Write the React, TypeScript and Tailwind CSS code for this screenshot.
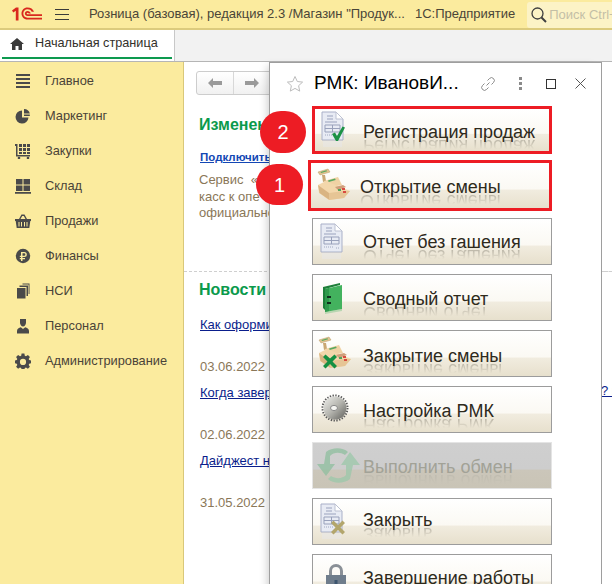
import type { ReactNode } from "react";

const FONT = "font-['Liberation_Sans',Arial,sans-serif]";

// small drawings for the left menu
const MenuIcons: Record<string, ReactNode> = {
  main: <path d="M1 1h14v2H1zM1 5h14v2H1zM1 9h14v2H1zM1 13h14v2H1z" />,
  marketing: (
    <>
      <path d="M7 2.500a6.500 6.500 0 1 0 6.500 7H7z" />
      <path d="M9 1a6 6 0 0 1 5.800 4.500H9z" />
      <path d="M9 6.500h5.800v1.500H9z" />
    </>
  ),
  purchases: (
    <>
      <path d="M0 1h2.500v11H15v1.500H1V3H0z" />
      <path d="M4 1h3v3H4zM8 1h3v3H8zM12 1h3v3h-3zM4 5h3v3H4zM8 5h3v3H8zM12 5h3v3h-3zM4 9h3v2H4zM8 9h3v2H8zM12 9h3v2h-3z" />
      <circle cx="4" cy="15" r="1.300" />
      <circle cx="13" cy="15" r="1.300" />
    </>
  ),
  stock: <path d="M1 1h6.500v5.500H1zM8.500 1H15v5.500H8.500zM1 7.500h6.500V13H1zM8.500 7.500H15V13H8.500zM0 14h16v1.800H0z" />,
  sales: (
    <>
      <path d="M4 6 6.500 1.500h3L12 6h-1.500L8.800 3H7.200L5.500 6z" />
      <path
        d="M0 6h16v2h-.7l-1 7H1.700l-1-7H0zM3.500 9v4.500h1V9zM6 9v4.500h1V9zM9 9v4.500h1V9zM11.500 9v4.500h1V9z"
        fillRule="evenodd"
      />
    </>
  ),
  finance: (
    <path
      d="M8 .8a7.200 7.200 0 1 0 0 14.400A7.200 7.200 0 0 0 8 .8zM6 4h3.300a2.500 2.500 0 0 1 0 5H7.500v1H10v1.200H7.500V13H6v-1.800H4.800V10H6V9H4.800V7.700H6zm1.500 1.300v2.400h1.700a1.200 1.200 0 0 0 0-2.400z"
      fillRule="evenodd"
    />
  ),
  nsi: <path d="M2 5h8.500v10.500H2zM4.500 2.500h8.500V13h-1.500V4h-7zM7.500.5H14.500V11h-.9V1.500H7.500z" />,
  staff: (
    <>
      <path d="M5 1h6v3.500c0 2-1.300 4-3 4s-3-2-3-4z" />
      <path d="M2 15.500v-2.500c0-2 2-3.300 3.800-3.700L8 11l2.200-1.700C12 9.700 14 11 14 13v2.500z" />
    </>
  ),
  admin: (
    <path
      d="M6.600.5h2.800l.4 2.200 1.200.5L12.900 2l2 2-1.200 1.900.5 1.200 2.200.4v2.800l-2.200.4-.5 1.200 1.200 1.900-2 2-1.900-1.200-1.200.5-.4 1.900H6.600l-.4-1.900-1.200-.5-1.900 1.200-2-2 1.200-1.900-.5-1.200L0 10.300V7.500l1.800-.4.500-1.200L1.100 4l2-2L5 3.200l1.200-.5zM8 5.800a3.100 3.100 0 1 0 0 6.200 3.100 3.100 0 0 0 0-6.200z"
      fillRule="evenodd"
    />
  ),
};

const MENU = [
  { id: "main", title: "Главное" },
  { id: "marketing", title: "Маркетинг" },
  { id: "purchases", title: "Закупки" },
  { id: "stock", title: "Склад" },
  { id: "sales", title: "Продажи" },
  { id: "finance", title: "Финансы" },
  { id: "nsi", title: "НСИ" },
  { id: "staff", title: "Персонал" },
  { id: "admin", title: "Администрирование" },
];

// document with lines, used by several buttons
const DocIcon = ({ badge }: { badge?: "check" | "cross" }) => (
  <svg width="34" height="42" viewBox="0 0 34 42" className="shrink-0">
    <path d="M4 3h14l7 7v21H4z" fill="#e8ebf4" stroke="#a9b0c8" />
    <path d="M18 3v7h7z" fill="#fff" stroke="#bcc1d2" />
    <path d="M9 7h6M9 10h6M7 13h12" stroke="#9aa2bd" />
    <path d="M7 16h15v7H7zM7 19.500h15M14.500 16v7" fill="none" stroke="#99a1bb" />
    <path d="M7 26h10M19 27h3" stroke="#a0a8c0" strokeDasharray="1 1" />
    <path d="M5 32h19v6H5z" fill="#e4e8f3" opacity="0.35" />
    {badge === "check" && (
      <path d="M14 25l3-1.500 2 3.500 5.500-9.500 2.500 1-7 13.500h-2z" fill="#1c9246" />
    )}
    {badge === "cross" && (
      <path
        d="M14 22l2.500-2.500 4.500 4.500 4.500-4.500L28 22l-4.500 4.500L28 31l-2.500 2.500-4.500-4.500-4.500 4.500L14 31l4.500-4.500z"
        fill="#b3a66c"
      />
    )}
  </svg>
);

const RegisterIcon = ({ badge }: { badge?: "cross" }) => (
  <svg width="36" height="38" viewBox="0 0 36 38" className="shrink-0">
    <path d="M2 5l10-3 2 3-10 3z" fill="#e1c28f" stroke="#b99a69" strokeWidth="0.5" />
    <path d="M4.500 5l6-1.800.6 1-6 1.800z" fill="#58a860" />
    <path d="M6 8l1 7 3-1-1-6z" fill="#caa774" />
    <path d="M8 14l14-4 4 8-16 3z" fill="#f0d2a4" />
    <path d="M12 13.500l7-2 .7 1.500-7 2z" fill="#58a860" />
    <path d="M2 18l8-4 24 10-6 7-15 2-10-7z" fill="#f3d7ab" />
    <path d="M2 18l11 8 .5 7-10-7z" fill="#d9b482" />
    <path d="M13 26l15-2 6 0-6 7-15 2z" fill="#e6c595" />
    <path d="M19 20l8-2 3 2-8 3z" fill="#cf9e7a" />
    <path d="M22 22h3v2h-3z" fill="#52a35c" />
    <path d="M26 21h3v2h-3zM27 24h3v2h-3z" fill="#d84a40" />
    {badge === "cross" && (
      <path
        d="M6 22l2.500-2.500 4.500 4 4.500-4 2.500 2.500-4.500 4.500 4.500 4.500-2.500 2.500-4.500-4.500-4.500 4.500L6 31l4.500-4.500z"
        fill="#159042"
      />
    )}
  </svg>
);

const FolderIcon = () => (
  <svg width="24" height="36" viewBox="0 0 24 36" className="shrink-0">
    <path d="M2 7l17-4v2L4 9v21l-2-2z" fill="#1f7f3a" />
    <path d="M4 9l17-4v24l-17 3z" fill="#43b25e" />
    <path d="M4 9l4-1v23l-4 1z" fill="#2f9a4c" />
    <path d="M6 16h4v2H6zM6 22h4v2H6z" fill="#10301c" />
    <path d="M4 32l17-3v2l-17 3z" fill="#43b25e" opacity="0.3" />
  </svg>
);

const GearIcon = () => (
  <svg width="30" height="34" viewBox="0 0 30 34" className="shrink-0">
    <defs>
      <linearGradient id="disc" x1="0" y1="0" x2="1" y2="1">
        <stop offset="0" stopColor="#f0f0ec" />
        <stop offset="0.5" stopColor="#b5b5af" />
        <stop offset="1" stopColor="#5f5f5b" />
      </linearGradient>
    </defs>
    <circle cx="15" cy="15" r="12.500" fill="none" stroke="#5a5a5a" strokeWidth="2" strokeDasharray="1.400 1.400" />
    <circle cx="15" cy="15" r="11.500" fill="url(#disc)" />
    <ellipse cx="14" cy="15" rx="3.500" ry="2.600" fill="#f5f5f2" stroke="#8a8a8a" />
  </svg>
);

const ExchangeIcon = () => (
  <svg width="46" height="40" viewBox="0 0 46 40" className="shrink-0" opacity="0.75">
    <path d="M11 6c6-5 17-5 22 0l-3 3c-5-3-11-3-15 1v8h5l-9 12L2 18h7z" fill="#8fbf9f" />
    <path d="M35 33c-6 5-17 5-22 0l3-3c5 3 11 3 15-1V19h-5l9-13 10 13h-7z" fill="#9cc8aa" />
  </svg>
);

const LockIcon = () => (
  <svg width="22" height="30" viewBox="0 0 22 30" className="shrink-0">
    <path d="M4 13V8a7 7 0 0 1 14 0v5h-3V8a4 4 0 0 0-8 0v5z" fill="#8a9097" />
    <path d="M1 12h20v18H1z" fill="#6f7d8c" />
    <path d="M9.500 17h3v8h-3z" fill="#3c556e" />
  </svg>
);

type BtnProps = {
  title: string;
  icon: ReactNode;
  disabled?: boolean;
  marked?: boolean;
  textPos: string;
  mirrorPos: string;
  iconBox: string;
};

// 1C-style big button, gradient body with a mirrored caption
const BigButton = ({ title, icon, disabled, marked, textPos, mirrorPos, iconBox }: BtnProps) => (
  <div
    className={`relative h-full w-full overflow-hidden ${marked ? "" : "border"} ${
      disabled
        ? "border-[#e4e4e4] bg-[linear-gradient(#cfcfcf_0%,#cdcdcd_58%,#cbc6ba_60%,#c9c4b6_100%)] text-[#a2a297]"
        : "border-[#9c9c9c] bg-[linear-gradient(#ffffff_0%,#fbf9f3_58%,#f1ecdf_60%,#e7e0cd_100%)] text-[#2e2a1c]"
    }`}
  >
    <div className={`absolute top-0 bottom-0 flex items-center ${iconBox}`}>{icon}</div>
    <span className={`absolute ${textPos} text-[18px] leading-[22px] whitespace-nowrap`}>{title}</span>
    <span
      aria-hidden
      className={`absolute ${mirrorPos} text-[18px] leading-[22px] whitespace-nowrap -scale-y-100 opacity-30 [mask-image:linear-gradient(to_bottom,transparent_35%,black_85%)]`}
    >
      {title}
    </span>
  </div>
);

const NewsLink = ({ text, date }: { text: string; date: string }) => (
  <div>
    <a className="block text-[13px] leading-[17px] text-[#0a1e8c] underline whitespace-nowrap">{text}</a>
    <p className="mt-[25px] text-[13px] leading-[17px] text-[#8a7758] whitespace-nowrap">{date}</p>
  </div>
);

const BUTTONS = [
  { title: "Отчет без гашения", icon: <DocIcon />, iconBox: "left-[4px]", textPos: "left-[50px] top-[12px]", mirrorPos: "left-[50px] top-[26px]" },
  { title: "Сводный отчет", icon: <FolderIcon />, iconBox: "left-[8px]", textPos: "left-[50px] top-[13px]", mirrorPos: "left-[50px] top-[27px]" },
  { title: "Закрытие смены", icon: <RegisterIcon badge="cross" />, iconBox: "left-[4px]", textPos: "left-[50px] top-[14px]", mirrorPos: "left-[50px] top-[28px]" },
  { title: "Настройка РМК", icon: <GearIcon />, iconBox: "left-[7px]", textPos: "left-[50px] top-[13px]", mirrorPos: "left-[50px] top-[27px]" },
  { title: "Выполнить обмен", icon: <ExchangeIcon />, iconBox: "left-[2px]", textPos: "left-[50px] top-[13px]", mirrorPos: "left-[50px] top-[27px]", disabled: true },
  { title: "Закрыть", icon: <DocIcon badge="cross" />, iconBox: "left-[4px]", textPos: "left-[50px] top-[10px]", mirrorPos: "left-[50px] top-[24px]" },
  { title: "Завершение работы", icon: <LockIcon />, iconBox: "left-[12px]", textPos: "left-[50px] top-[12px]", mirrorPos: "left-[50px] top-[26px]" },
];

export default function App() {
  return (
    <div className={`${FONT} relative w-[612px] h-[584px] overflow-hidden bg-white flex flex-col`}>
      {/* Top bar */}
      <header className="h-[30px] shrink-0 flex items-center bg-[#fbeb9e] border-b-2 border-[#dccb7d]">
        <svg width="30" height="14" viewBox="0 0 30 14" className="ml-[12px] shrink-0">
          <path d="M0 3.500L4 .5h2.500V13.500H3.800V3.800L1.300 5.500z" fill="#d9281e" />
          <path
            d="M15.500.5c-3.600 0-6 2.700-6 6s2.400 6 6 6H30v-1.800H15.500c-2.500 0-4.200-1.900-4.200-4.200s1.700-4.200 4.200-4.200c2 0 3.300.8 4.200 2.400H22C21 2 18.700.5 15.500.5z"
            fill="#d9281e"
          />
          <path
            d="M15.500 4c-1.500 0-2.600 1.100-2.600 2.500S14 9 15.500 9H30V7.300H15.500c-.5 0-.8-.3-.8-.8s.3-.8.8-.8c.6 0 1 .2 1.300.8h2C18.400 4.900 17.200 4 15.500 4z"
            fill="#d9281e"
          />
        </svg>
        <div className="ml-[13px] w-[14px] flex flex-col gap-[4px] shrink-0">
          <span className="h-px bg-[#3a3a3a]" />
          <span className="h-px bg-[#3a3a3a]" />
          <span className="h-px bg-[#3a3a3a]" />
        </div>
        <span className="ml-[20px] text-[13px] text-[#4a4538] whitespace-nowrap">
          Розница (базовая), редакция 2.3 /Магазин "Продук...
        </span>
        <span className="ml-[10px] text-[13px] text-[#4a4538] whitespace-nowrap">1С:Предприятие</span>
        <div className="ml-[12px] flex-1 h-[26px] -mb-px bg-[#fcf3c6] rounded-l-[3px] flex items-center pl-[3px] overflow-hidden">
          <svg width="18" height="18" viewBox="0 0 18 18" className="shrink-0">
            <circle cx="7.500" cy="7.500" r="5.500" fill="none" stroke="#3f3f3f" strokeWidth="1.300" />
            <path d="M11.500 11.500L16 16" stroke="#3f3f3f" strokeWidth="2" />
          </svg>
          <span className="ml-[1px] text-[13px] text-[#c4bfa6] whitespace-nowrap">Поиск Ctrl+</span>
        </div>
      </header>

      {/* Tabs */}
      <div className="h-[32px] shrink-0 flex bg-[#f2f2f2] border-b border-[#b5b5b5]">
        <div className="w-[175px] bg-white border-r border-[#c8c8c8] px-[2px] flex flex-col">
          <div className="flex-1 flex items-center">
            <svg width="14" height="12" viewBox="0 0 14 12" className="ml-[8px] shrink-0">
              <path d="M7 0l7 6h-2v6H8.500V8h-3v4H2V6H0z" fill="#3a3a3a" />
            </svg>
            <span className="ml-[11px] text-[12.700px] text-[#33302a] whitespace-nowrap">Начальная страница</span>
          </div>
          <div className="h-[2px] mb-[2px] bg-[#0d9a4f]" />
        </div>
      </div>

      <div className="flex-1 flex min-h-0">
        {/* Left menu */}
        <aside className="w-[184px] shrink-0 bg-[#fbeb9e] border-r border-[#d9c87a] pt-[1px]">
          {MENU.map((item) => (
            <div key={item.id} className="h-[35px] flex items-center">
              <svg width="16" height="16" viewBox="0 0 16 16" fill="#4a4a4a" className="ml-[15px] shrink-0">
                {MenuIcons[item.id]}
              </svg>
              <span className="ml-[14px] text-[12.800px] text-[#4a4338] whitespace-nowrap">{item.title}</span>
            </div>
          ))}
        </aside>

        {/* Home page behind the dialog */}
        <main className="flex-1 min-w-0 overflow-hidden bg-white">
          <div className="pl-[15px] pt-[9px]">
            <div className="-ml-[3px] w-[100px] h-[24px] flex border border-[#cdcdcd] rounded-[3px] bg-[linear-gradient(#ffffff,#f1f1f1)]">
              <div className="w-[37px] border-r border-[#d8d8d8] flex items-center justify-center text-[#9a9a9a]">
                <svg width="14" height="10" viewBox="0 0 14 10">
                  <path d="M0 5l5-5v3h9v4H5v3z" fill="currentColor" />
                </svg>
              </div>
              <div className="w-[36px] flex items-center justify-center text-[#9a9a9a]">
                <svg width="14" height="10" viewBox="0 0 14 10">
                  <path d="M14 5L9 0v3H0v4h9v3z" fill="currentColor" />
                </svg>
              </div>
            </div>
            <h2 className="mt-[20px] h-[20px] text-[16px] leading-[20px] font-bold text-[#0b9a4c] whitespace-nowrap">Изменения</h2>
            <a className="block mt-[15px] ml-[1px] text-[11.500px] leading-[14px] font-bold text-[#1347b4] underline whitespace-nowrap">
              Подключить
            </a>
            <p className="mt-[8px] text-[13px] leading-[16.500px] text-[#8a7758] whitespace-pre">
              {"Сервис  «"}
              <br />
              касс к опе
              <br />
              официально
            </p>
          </div>
          <div className="mt-[49px] border-t border-dashed border-[#cfcfcf]" />
          <div className="pl-[15px]">
            <h2 className="mt-[8px] text-[16px] leading-[20px] font-bold text-[#0b9a4c] whitespace-nowrap">Новости</h2>
            <div className="mt-[16px] ml-[1px] flex flex-col gap-[9px]">
              <NewsLink text="Как оформить" date="03.06.2022" />
              <NewsLink text="Когда завершится" date="02.06.2022" />
              <NewsLink text="Дайджест новостей" date="31.05.2022" />
            </div>
          </div>
        </main>
      </div>

      {/* Text that pokes out right of the dialog */}
      <a className="absolute left-[601px] top-[382px] text-[13px] leading-[17px] text-[#0a1e8c] underline whitespace-nowrap">
        ? п
      </a>
      <div className="absolute left-[602px] right-0 top-[271px] border-t border-dashed border-[#cfcfcf]" />

      {/* Dialog */}
      <section className="absolute left-[269px] top-[62px] w-[333px] h-[540px] bg-white border-l border-r border-t border-[#9e9e9e] shadow-[-6px_0_8px_-4px_rgba(0,0,0,0.18)] pl-[42px]">
        <div className="h-[41px] mb-[2px] flex items-center -ml-[42px]">
          <svg width="18" height="18" viewBox="0 0 18 18" className="ml-[16px] shrink-0">
            <path d="M9 1.500l2.300 5 5.300.6-4 3.600 1.100 5.400L9 13.400l-4.700 2.700 1.100-5.400-4-3.600 5.300-.6z" fill="none" stroke="#bdbdbd" />
          </svg>
          <span className="ml-[10px] text-[19px] text-black whitespace-nowrap">РМК: ИвановИ...</span>
          <svg width="16" height="16" viewBox="0 0 16 16" className="ml-[21px] shrink-0" fill="none" stroke="#8a8a8a" strokeWidth="1">
            <path d="M6.500 9.500l3-3" />
            <path d="M7.500 4.500l2-2a2.800 2.800 0 0 1 4 4l-2 2M8.500 11.500l-2 2a2.800 2.800 0 0 1-4-4l2-2" />
          </svg>
          <div className="ml-[23px] flex flex-col gap-[2px] shrink-0">
            <span className="w-[3px] h-[3px] bg-[#8a8a8a]" />
            <span className="w-[3px] h-[3px] bg-[#8a8a8a]" />
            <span className="w-[3px] h-[3px] bg-[#8a8a8a]" />
          </div>
          <div className="ml-[24px] w-[10px] h-[10px] border border-[#333] shrink-0" />
          <svg width="11" height="11" viewBox="0 0 11 11" className="ml-[19px] shrink-0">
            <path d="M.5.500l10 10M10.500.500l-10 10" stroke="#555" />
          </svg>
        </div>

        <div className="w-[240px] h-[48px] border-[3px] border-[#ed1c24]">
          <BigButton
            marked
            title="Регистрация продаж"
            icon={<DocIcon badge="check" />}
            textPos="left-[48px] top-[12px]"
            mirrorPos="left-[48px] top-[26px]"
            iconBox="left-[3px]"
          />
        </div>
        <div className="mt-[6px] -ml-[4px] w-[244px] h-[51px] border-[3px] border-[#ed1c24]">
          <BigButton
            marked
            title="Открытие смены"
            icon={<RegisterIcon />}
            textPos="left-[49px] top-[13px]"
            mirrorPos="left-[49px] top-[27px]"
            iconBox="left-[5px]"
          />
        </div>

        <div className="mt-[7px] flex flex-col gap-[9px]">
          {BUTTONS.map((b) => (
            <div key={b.title} className="w-[240px] h-[47px] shrink-0">
              <BigButton
                title={b.title}
                icon={b.icon}
                textPos={b.textPos}
                mirrorPos={b.mirrorPos}
                iconBox={b.iconBox}
                disabled={b.disabled}
              />
            </div>
          ))}
        </div>
      </section>

      {/* Step markers over the dialog */}
      <div className="absolute left-[260px] top-[111px] w-[46px] h-[42px] rounded-full bg-[#ed1c24] flex items-center justify-center text-white text-[20px]">
        2
      </div>
      <div className="absolute left-[256px] top-[164px] w-[47px] h-[41px] rounded-full bg-[#ed1c24] flex items-center justify-center text-white text-[20px]">
        1
      </div>
    </div>
  );
}
